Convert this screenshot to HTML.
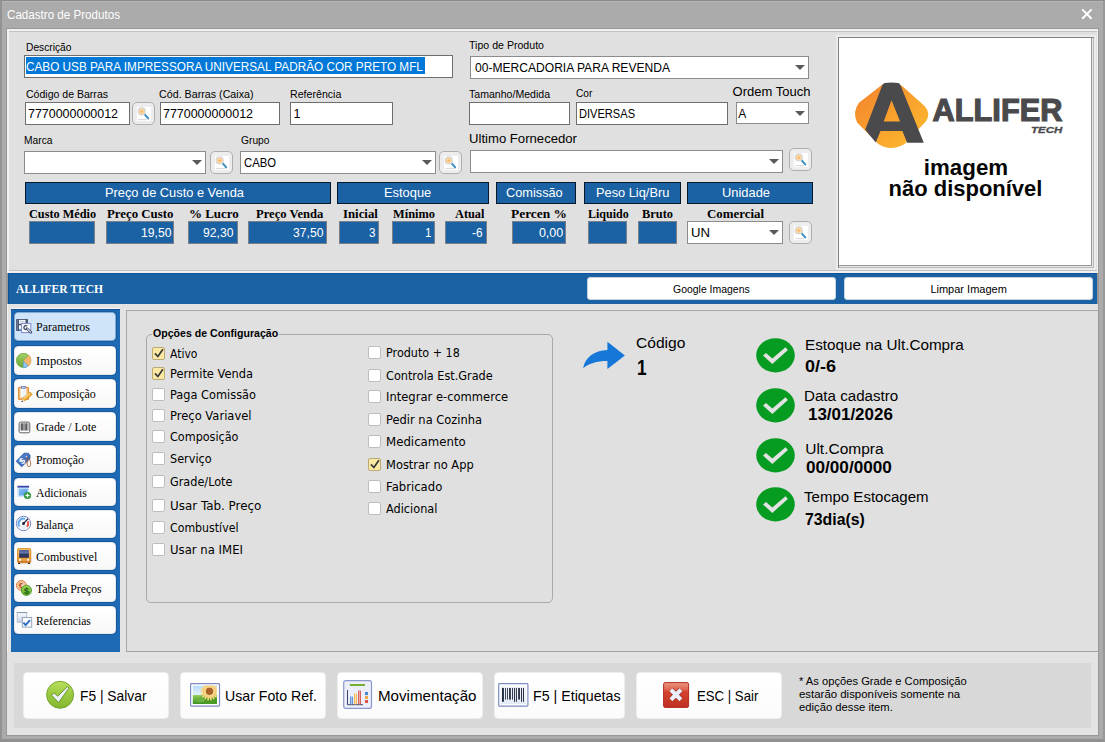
<!DOCTYPE html>
<html lang="pt-BR">
<head>
<meta charset="utf-8">
<title>Cadastro de Produtos</title>
<style>
*{box-sizing:border-box;margin:0;padding:0}
html,body{width:1105px;height:742px;overflow:hidden}
body{position:relative;background:#ababab;font-family:"Liberation Sans",sans-serif;font-size:12px;color:#000}
#win{position:absolute;left:0;top:0;width:1105px;height:742px;background:#ababab;overflow:hidden}
#win>div,#win>svg{position:absolute}
.t{white-space:nowrap;line-height:1;transform-origin:0 50%}
.inp{background:#fff;border:1px solid #6e6e6e;height:23px}
.cmb{background:#fff;border:1px solid #8c8c8c;height:23px}
.cmb:after{content:"";position:absolute;right:3px;top:8px;border-left:5px solid transparent;border-right:5px solid transparent;border-top:5px solid #5a5a5a}
.sb{width:23px;height:23px;border:1px solid #adadad;border-radius:5px;background:#ededed}
.sb svg{position:absolute;left:4px;top:4px}
.hd{height:22px;background:#1b62a4;border:1px solid #06182c}
.bx{height:23px;background:#1b62a4;border:1px solid #7b7f86}
.wb{height:23px;background:#fff;border:1px solid #c9d3df;border-radius:3px}
.nb{left:14px;width:102px;background:linear-gradient(#ffffff,#f8f8f8);border:1px solid #e3e8ee;border-radius:4px;box-shadow:0 0 0 1px #17599f}
.nb.sel{background:#cfe4f8;border-color:#7fadd9;box-shadow:0 0 0 1px #17599f}
.cb{width:13px;height:13px;background:#fff;border:1px solid #bdbdbd;border-radius:2px}
.cb.on{background:#fbe9a3;border-color:#b9ab76}
.cb svg{position:absolute;left:-1px;top:-1px}
.bb{top:672px;height:47px;background:linear-gradient(#ffffff,#fbfbfb);border:1px solid #ededed;border-radius:4px}
</style>
</head>
<body>
<div id="win">
<!-- window frame -->
<div style="left:0;top:0;width:1105px;height:742px;border:1px solid #8a8a8a;border-left:2px solid #939393;border-right:2px solid #989898;border-bottom:3px solid #909090"></div>
<div style="left:2px;top:1px;width:1101px;height:1px;background:#b6b6b6"></div>
<div style="left:6px;top:28px;width:1093px;height:708px;background:#979797"></div>
<svg style="left:1081px;top:8px" width="12" height="12" viewBox="0 0 12 12"><path d="M1.2 1.4 L10.6 10.8 M10.6 1.4 L1.2 10.8" stroke="#fff" stroke-width="2" fill="none"/></svg>

<!-- top panel -->
<div style="left:7px;top:29px;width:1091px;height:244px;background:#f1f1f1"></div>
<div style="left:9px;top:31px;width:1088px;height:240px;background:#e0e0e0;border-top:1px solid #c2c2c2;border-bottom:1px solid #c2c2c2"></div>

<div class="inp" style="left:24px;top:55px;width:429px"></div>
<div style="left:26px;top:57px;width:399px;height:17px;background:#0078d7"></div>
<div class="cmb" style="left:470px;top:56px;width:339px"></div>

<div class="inp" style="left:25px;top:102px;width:105px"></div>
<div class="sb" style="left:132px;top:102px"><svg width="14" height="14" viewBox="0 0 14 14"><rect x="0" y="0" width="14" height="14" fill="#fff"/><path d="M1.3 12.6 H10" stroke="#d6d6d6" stroke-width="1"/><path d="M7.5 7.2 L11.2 11.4" stroke="#3b8ec2" stroke-width="2" stroke-linecap="round"/><circle cx="4.7" cy="4.4" r="3.5" fill="#fbd6a2" stroke="#d6d6d6" stroke-width="1.2"/><path d="M3 4.8 Q4.6 2.4 6.4 4.6 Q4.8 6.8 3 4.8Z" fill="#f5b565"/></svg></div>
<div class="inp" style="left:160px;top:102px;width:120px"></div>
<div class="inp" style="left:290px;top:102px;width:103px"></div>
<div class="inp" style="left:469px;top:102px;width:101px"></div>
<div class="inp" style="left:576px;top:102px;width:152px"></div>
<div class="cmb" style="left:736px;top:101.5px;width:73px;height:22.5px"></div>

<div class="cmb" style="left:24px;top:151px;width:182px"></div>
<div class="sb" style="left:210px;top:151px"><svg width="14" height="14" viewBox="0 0 14 14"><rect x="0" y="0" width="14" height="14" fill="#fff"/><path d="M1.3 12.6 H10" stroke="#d6d6d6" stroke-width="1"/><path d="M7.5 7.2 L11.2 11.4" stroke="#3b8ec2" stroke-width="2" stroke-linecap="round"/><circle cx="4.7" cy="4.4" r="3.5" fill="#fbd6a2" stroke="#d6d6d6" stroke-width="1.2"/><path d="M3 4.8 Q4.6 2.4 6.4 4.6 Q4.8 6.8 3 4.8Z" fill="#f5b565"/></svg></div>
<div class="cmb" style="left:240px;top:151px;width:196px"></div>
<div class="sb" style="left:439px;top:151px"><svg width="14" height="14" viewBox="0 0 14 14"><rect x="0" y="0" width="14" height="14" fill="#fff"/><path d="M1.3 12.6 H10" stroke="#d6d6d6" stroke-width="1"/><path d="M7.5 7.2 L11.2 11.4" stroke="#3b8ec2" stroke-width="2" stroke-linecap="round"/><circle cx="4.7" cy="4.4" r="3.5" fill="#fbd6a2" stroke="#d6d6d6" stroke-width="1.2"/><path d="M3 4.8 Q4.6 2.4 6.4 4.6 Q4.8 6.8 3 4.8Z" fill="#f5b565"/></svg></div>
<div class="cmb" style="left:470px;top:150px;width:313px"></div>
<div class="sb" style="left:789px;top:148px"><svg width="14" height="14" viewBox="0 0 14 14"><rect x="0" y="0" width="14" height="14" fill="#fff"/><path d="M1.3 12.6 H10" stroke="#d6d6d6" stroke-width="1"/><path d="M7.5 7.2 L11.2 11.4" stroke="#3b8ec2" stroke-width="2" stroke-linecap="round"/><circle cx="4.7" cy="4.4" r="3.5" fill="#fbd6a2" stroke="#d6d6d6" stroke-width="1.2"/><path d="M3 4.8 Q4.6 2.4 6.4 4.6 Q4.8 6.8 3 4.8Z" fill="#f5b565"/></svg></div>

<div class="hd" style="left:25px;top:182px;width:306px"></div>
<div class="hd" style="left:337px;top:182px;width:152px"></div>
<div class="hd" style="left:496px;top:182px;width:80px"></div>
<div class="hd" style="left:584px;top:182px;width:97px"></div>
<div class="hd" style="left:687px;top:182px;width:126px"></div>

<div class="bx" style="left:29px;top:221px;width:66px"></div>
<div class="bx" style="left:106px;top:221px;width:68px"></div>
<div class="bx" style="left:188px;top:221px;width:50px"></div>
<div class="bx" style="left:248px;top:221px;width:79px"></div>
<div class="bx" style="left:339px;top:221px;width:40px"></div>
<div class="bx" style="left:392px;top:221px;width:43px"></div>
<div class="bx" style="left:445px;top:221px;width:42px"></div>
<div class="bx" style="left:512px;top:221px;width:54px"></div>
<div class="bx" style="left:588px;top:221px;width:39px"></div>
<div class="bx" style="left:638px;top:221px;width:39px"></div>
<div class="cmb" style="left:687px;top:221px;width:96px"></div>
<div class="sb" style="left:789px;top:221px"><svg width="14" height="14" viewBox="0 0 14 14"><rect x="0" y="0" width="14" height="14" fill="#fff"/><path d="M1.3 12.6 H10" stroke="#d6d6d6" stroke-width="1"/><path d="M7.5 7.2 L11.2 11.4" stroke="#3b8ec2" stroke-width="2" stroke-linecap="round"/><circle cx="4.7" cy="4.4" r="3.5" fill="#fbd6a2" stroke="#d6d6d6" stroke-width="1.2"/><path d="M3 4.8 Q4.6 2.4 6.4 4.6 Q4.8 6.8 3 4.8Z" fill="#f5b565"/></svg></div>

<!-- image panel -->
<div style="left:836px;top:35px;width:260px;height:235px;background:#ececec"></div>
<div style="left:838px;top:37px;width:256px;height:231px;background:#b9b9b9;border-left:1px solid #828282;border-top:1px solid #828282"></div>
<div style="left:839px;top:38px;width:254px;height:229px;background:#e6e6e6"></div>
<div style="left:839px;top:38px;width:253px;height:228px;background:#989898"></div>
<div style="left:839px;top:38px;width:252px;height:227px;background:#fff"></div>
<svg style="left:840px;top:39px" width="252" height="226" viewBox="840 39 252 226">
<defs><linearGradient id="lg" x1="0" y1="0" x2="1" y2="1"><stop offset="0" stop-color="#f4812d"/><stop offset="1" stop-color="#fdbf2d"/></linearGradient></defs>
<path d="M859 102.8 L882.4 84.6 Q890.4 81.6 901.6 85.6 L924.8 106.3 Q931.2 113.5 925.8 121.5 L904.6 143.9 Q890.4 152 878.3 143.9 L857.1 122.5 Q852 112 859 102.8 Z" fill="url(#lg)"/>
<path d="M884.6 83 Q891.5 82.2 898.3 83 Q899.8 83.4 900.4 85 L923.8 142.7 L907.1 142.7 L902.4 131.1 L880.5 131.1 L875.8 142.4 L865.2 129.8 L882.4 85 Q883.2 83.4 884.6 83 Z M891.5 100.2 L883.7 121.5 L900.1 121.5 Z" fill="#4a4a4d" fill-rule="evenodd"/>
<text x="932.6" y="0" transform="translate(0,121.4) scale(1,1.09)" font-family="'Liberation Sans',sans-serif" font-weight="bold" font-size="28.4" fill="#4a4a4d" stroke="#4a4a4d" stroke-width="1.1" textLength="129.8" lengthAdjust="spacingAndGlyphs">ALLIFER</text>
<text x="1031" y="132.7" font-family="'Liberation Sans',sans-serif" font-weight="bold" font-style="italic" font-size="9" fill="#4a4a4d" stroke="#4a4a4d" stroke-width="0.3" textLength="31.2" lengthAdjust="spacingAndGlyphs">TECH</text>
<text x="923.8" y="175" font-family="'Liberation Sans',sans-serif" font-weight="bold" font-size="21.7" fill="#050505" textLength="84.4" lengthAdjust="spacingAndGlyphs">imagem</text>
<text x="888.6" y="195.5" font-family="'Liberation Sans',sans-serif" font-weight="bold" font-size="21.7" fill="#050505" textLength="153.8" lengthAdjust="spacingAndGlyphs">não disponível</text>
</svg>

<!-- blue band -->
<div style="left:8px;top:273px;width:1089px;height:31px;background:#1a62a4;border-top:1px solid #0e539b;border-left:1px solid #0e539b"></div>
<div class="wb" style="left:587px;top:277px;width:249px"></div>
<div class="wb" style="left:844px;top:277px;width:249px"></div>

<!-- sidebar -->
<div style="left:7px;top:304px;width:1091px;height:348px;background:#e3e3e3;border-left:1px solid #f4f4f4"></div>
<div style="left:11px;top:308px;width:108.5px;height:344px;background:#1e6ab4;border-top:1px solid #f4f4f4;box-shadow:inset 0 1px 0 #125096"></div>
<div class="nb sel" style="top:312px;height:29px"></div>
<div class="nb" style="top:346px;height:29px"></div>
<div class="nb" style="top:379px;height:29px"></div>
<div class="nb" style="top:412px;height:29px"></div>
<div class="nb" style="top:445px;height:28px"></div>
<div class="nb" style="top:478px;height:28px"></div>
<div class="nb" style="top:510px;height:28px"></div>
<div class="nb" style="top:542px;height:28px"></div>
<div class="nb" style="top:574px;height:28px"></div>
<div class="nb" style="top:606px;height:28px"></div>

<!-- Parametros: floppy + doc/wrench -->
<svg style="left:16px;top:319px" width="17" height="15" viewBox="0 0 17 15"><rect x="0.1" y="0" width="11.9" height="11.9" rx=".6" fill="#4a5572"/><rect x="0.9" y="0.6" width="1.1" height="10.6" fill="#6e7890"/><rect x="3" y="0.9" width="6.5" height="3.9" fill="#f2f5fb"/><rect x="4" y="2.1" width="4.6" height="1.4" fill="#c9cfdc"/><rect x="3" y="6.3" width="4" height="4.9" fill="#fdfdfd"/><rect x="3" y="10.1" width="4" height="1.1" fill="#3f8fdc"/><rect x="5.6" y="4.6" width="9.2" height="9" fill="#fbfcff" stroke="#7f88c8" stroke-width="1"/><path d="M11.2 7 A2 2 0 1 0 11.6 9.6" fill="none" stroke="#3a4560" stroke-width="1.3"/><path d="M11 9.6 L14.8 13.4" stroke="#3a4560" stroke-width="2.5" stroke-linecap="round"/><path d="M11.4 10 L14.6 13.2" stroke="#c4d0e6" stroke-width="1.2" stroke-linecap="round"/></svg>
<!-- Impostos: pie -->
<svg style="left:16px;top:353px" width="17" height="16" viewBox="0 0 17 16"><defs><linearGradient id="pg" x1="0" y1="0" x2="0" y2="1"><stop offset="0" stop-color="#a3d16c"/><stop offset=".5" stop-color="#86bb4c"/><stop offset="1" stop-color="#6aa637"/></linearGradient></defs><circle cx="7.5" cy="7.4" r="7.1" fill="url(#pg)" stroke="#5f9d30" stroke-width=".7"/><path d="M7.5 7.4 L12.45 12.9 A7.4 7.4 0 0 1 7.11 14.79 Z" fill="#8ec5f2" stroke="#4a8ad0" stroke-width=".4"/><path d="M7.7 7.4 L13.0 2.26 A7.4 7.4 0 0 1 12.65 12.9 Z" fill="#f8b872" stroke="#d99450" stroke-width=".5"/></svg>
<!-- Composicao: clipboard + pencil -->
<svg style="left:17px;top:385px" width="16" height="18" viewBox="0 0 16 18"><rect x="1.7" y="2.6" width="9.6" height="11.7" rx=".8" fill="#f9d9a8" stroke="#e2933f" stroke-width="1.5"/><rect x="3.9" y="2.5" width="5" height="9.4" fill="#eef2fa"/><rect x="3.9" y="2.5" width="1.6" height="9.4" fill="#fbfcff"/><rect x="3.9" y="1" width="5" height="2.7" rx=".8" fill="#6f80bb"/><rect x="4.9" y="1.9" width="3" height=".8" fill="#eef1fa"/><path d="M13.2 7 L15.4 9.4 L7.6 16 L5.3 13.6 Z" fill="#f2b035" stroke="#c88422" stroke-width=".6"/><path d="M12.6 8.2 L6.4 13.7" stroke="#fdf0c0" stroke-width="1"/><path d="M5.3 13.6 L7.6 16 L4.6 17 Z" fill="#f4dcb4"/><path d="M5 15.4 L6.2 16.5 L4.4 17.2 Z" fill="#1c2150"/></svg>
<!-- Grade/Lote: barcode -->
<svg style="left:18px;top:421px" width="13" height="13" viewBox="0 0 13 13"><rect x="1.1" y="1.1" width="10.7" height="10.7" rx="1.6" fill="#fbfbfb" stroke="#4a4e56" stroke-width=".9"/><rect x="2.2" y="2.4" width="8.6" height="7" fill="#b0b0b0"/><rect x="3" y="2.4" width="2" height="7" fill="#626468"/><rect x="5" y="2.4" width="2.4" height="7" fill="#979797"/><rect x="7.4" y="2.4" width="2" height="7" fill="#585a5e"/><rect x="9.4" y="2.4" width="1.4" height="7" fill="#bdbdbd"/></svg>
<!-- Promocao: tag -->
<svg style="left:15px;top:452px" width="18" height="17" viewBox="0 0 18 17"><defs><linearGradient id="tg" x1="0" y1="0" x2="1" y2="1"><stop offset="0" stop-color="#5a8ad6"/><stop offset="1" stop-color="#2f5fae"/></linearGradient></defs><path d="M1.1 9.3 L9 1.2 L13.2 1.2 L15 3 L15 6.7 L6.7 14.8 Z" fill="url(#tg)" stroke="#234f9a" stroke-width=".7" stroke-linejoin="round"/><text x="4.6" y="11.6" font-family="'Liberation Sans',sans-serif" font-weight="bold" font-size="8.6" fill="#fff" transform="rotate(-45 7.4 8.6)">$</text><circle cx="11.4" cy="4.6" r="0.8" fill="#eef2fc"/><path d="M11.6 4.8 C12.4 6 12.2 9 12.2 12 C12.3 14.6 14 15.4 15 14.2 C16.4 12.4 15.6 9 13.6 6.2" fill="none" stroke="#a55a2c" stroke-width=".9"/></svg>
<!-- Adicionais: window + plus -->
<svg style="left:17px;top:485px" width="16" height="16" viewBox="0 0 16 16"><defs><linearGradient id="wg" x1="0" y1="0" x2="1" y2="1"><stop offset="0" stop-color="#8cc0f2"/><stop offset="1" stop-color="#4d93e2"/></linearGradient></defs><rect x="0.4" y="2.6" width="11.6" height="9.2" fill="#c4e2fc"/><rect x="2" y="3.8" width="8.6" height="6.6" fill="url(#wg)"/><rect x="0.4" y="0.8" width="11.6" height="1.8" fill="#3944b0"/><circle cx="10.5" cy="10.5" r="3.6" fill="#2f9b3d"/><path d="M10.5 7.9 L11.3 9.7 L13.1 10.5 L11.3 11.3 L10.5 13.1 L9.7 11.3 L7.9 10.5 L9.7 9.7 Z" fill="#fff"/></svg>
<!-- Balanca: gauge -->
<svg style="left:15px;top:515px" width="17" height="17" viewBox="0 0 17 17"><circle cx="8.5" cy="8.5" r="7.2" fill="#fbfcfe" stroke="#5a68b8" stroke-width=".8"/><path d="M3.6 12.4 A6 6 0 0 0 13.4 12.4 L10.6 10.4 L6.4 10.4 Z" fill="#e9eef8"/><path d="M4.55 11.39 A4.9 4.9 0 0 1 10.14 3.88" fill="none" stroke="#5eaaec" stroke-width="2"/><path d="M12.69 6.37 A4.7 4.7 0 0 1 11.99 11.64" fill="none" stroke="#e24a3a" stroke-width="1.9"/><path d="M8.5 8.5 L12.8 4" stroke="#1b2142" stroke-width="1.1" stroke-linecap="round"/><circle cx="8.5" cy="8.5" r="1.5" fill="#1b2142"/></svg>
<!-- Combustivel: bus -->
<svg style="left:17px;top:548px" width="15" height="17" viewBox="0 0 15 17"><defs><linearGradient id="bg1" x1="0" y1="0" x2="0" y2="1"><stop offset="0" stop-color="#f6bd58"/><stop offset=".8" stop-color="#ec9a34"/><stop offset="1" stop-color="#b8601a"/></linearGradient><linearGradient id="bw" x1="0" y1="0" x2="0" y2="1"><stop offset="0" stop-color="#4a5a94"/><stop offset=".35" stop-color="#6c7bb0"/><stop offset=".5" stop-color="#333e68"/><stop offset="1" stop-color="#262f54"/></linearGradient></defs><rect x="1" y="14.6" width="2.2" height="1.4" rx=".5" fill="#151a30"/><rect x="10.9" y="14.6" width="2.2" height="1.4" rx=".5" fill="#151a30"/><rect x="0.4" y="0.4" width="13.4" height="14.4" rx="1.6" fill="url(#bg1)" stroke="#cf7f24" stroke-width=".8"/><rect x="2.1" y="2.1" width="9.8" height="7.7" rx=".8" fill="url(#bw)"/><rect x="2.1" y="10.9" width="1.9" height="1.9" fill="#fff"/><rect x="10.1" y="10.9" width="1.9" height="1.9" fill="#fff"/><rect x="4.6" y="11" width="4.8" height="1.7" fill="#e9a544"/></svg>
<!-- Tabela Precos: coins -->
<svg style="left:15px;top:578px" width="19" height="19" viewBox="0 0 19 19"><defs><linearGradient id="cg" x1="0" y1="0" x2="0" y2="1"><stop offset="0" stop-color="#a0d85a"/><stop offset="1" stop-color="#5fa82c"/></linearGradient></defs><circle cx="6.3" cy="7.4" r="4.9" fill="#f9d6b4" stroke="#d77a3c" stroke-width="1"/><circle cx="6.3" cy="7.4" r="3.4" fill="none" stroke="#eaa878" stroke-width=".6"/><text x="3.7" y="10.1" font-family="'Liberation Sans',sans-serif" font-weight="bold" font-size="7.6" fill="#b84a1c">€</text><circle cx="11.4" cy="12.3" r="5.1" fill="url(#cg)" stroke="#4f962a" stroke-width=".9"/><text x="8.9" y="15.6" font-family="'Liberation Sans',sans-serif" font-weight="bold" font-size="9" fill="#1f5c12">$</text></svg>
<!-- Referencias: squares + check -->
<svg style="left:16px;top:611px" width="17" height="17" viewBox="0 0 17 17"><defs><linearGradient id="rg1" x1="0" y1="0" x2="0" y2="1"><stop offset="0" stop-color="#fdfeff"/><stop offset="1" stop-color="#c6d2e3"/></linearGradient></defs><rect x="1.2" y="1.6" width="9.6" height="9.6" fill="url(#rg1)" stroke="#a9b7cb" stroke-width=".8"/><path d="M0.8 1.6 H11.2" stroke="#7d8fab" stroke-width=".9"/><rect x="6.3" y="6.5" width="9.4" height="9.6" fill="#fcfdff" stroke="#8c9cb6" stroke-width=".9"/><path d="M7.4 11.6 L9.6 14.1 L14 9.2" fill="none" stroke="#2a6fc2" stroke-width="2"/></svg>


<!-- main panel -->
<div style="left:126px;top:310px;width:972px;height:342px;background:#e0e0e0;border:1px solid #a6a6a6;border-right:none;border-bottom-color:#a0a0a0"></div>
<div style="left:146px;top:334px;width:407px;height:269px;border:1px solid #a9a9a9;border-radius:5px"></div>

<div class="cb on" style="left:152px;top:347px"><svg width="13" height="13" viewBox="0 0 13 13"><path d="M2.9 6.4 L5.9 9.5 L10.9 2.2" fill="none" stroke="#383838" stroke-width="1.7"/></svg></div>
<div class="cb on" style="left:152px;top:367px"><svg width="13" height="13" viewBox="0 0 13 13"><path d="M2.9 6.4 L5.9 9.5 L10.9 2.2" fill="none" stroke="#383838" stroke-width="1.7"/></svg></div>
<div class="cb" style="left:152px;top:388px"></div>
<div class="cb" style="left:152px;top:409px"></div>
<div class="cb" style="left:152px;top:430px"></div>
<div class="cb" style="left:152px;top:452px"></div>
<div class="cb" style="left:152px;top:475px"></div>
<div class="cb" style="left:152px;top:499px"></div>
<div class="cb" style="left:152px;top:521px"></div>
<div class="cb" style="left:152px;top:543px"></div>
<div class="cb" style="left:368px;top:346px"></div>
<div class="cb" style="left:368px;top:369px"></div>
<div class="cb" style="left:368px;top:390px"></div>
<div class="cb" style="left:368px;top:413px"></div>
<div class="cb" style="left:368px;top:435px"></div>
<div class="cb on" style="left:368px;top:458px"><svg width="13" height="13" viewBox="0 0 13 13"><path d="M2.9 6.4 L5.9 9.5 L10.9 2.2" fill="none" stroke="#383838" stroke-width="1.7"/></svg></div>
<div class="cb" style="left:368px;top:480px"></div>
<div class="cb" style="left:368px;top:502px"></div>

<!-- code arrow -->
<svg style="left:582px;top:341px" width="44" height="29" viewBox="0 0 44 29"><path d="M1.1 27.3 C3 17 12 9.3 25.4 9.1 L25.4 0.7 L42.9 14.4 L25.4 28.1 L25.4 19.9 C15 19.9 6 22.5 1.1 27.3 Z" fill="#1578d8"/></svg>
<svg style="left:756px;top:338px" width="40" height="35" viewBox="0 0 40 35"><ellipse cx="19.5" cy="17.3" rx="19.3" ry="17.1" fill="#069c22"/><path d="M7 17.4 L10 15 L16.3 20.4 L29.5 9.2 L31.9 12 L16.3 25.9 Z" fill="#e2e2e2"/></svg>
<svg style="left:756px;top:388px" width="40" height="35" viewBox="0 0 40 35"><ellipse cx="19.5" cy="17.3" rx="19.3" ry="17.1" fill="#069c22"/><path d="M7 17.4 L10 15 L16.3 20.4 L29.5 9.2 L31.9 12 L16.3 25.9 Z" fill="#e2e2e2"/></svg>
<svg style="left:756px;top:437.5px" width="40" height="35" viewBox="0 0 40 35"><ellipse cx="19.5" cy="17.3" rx="19.3" ry="17.1" fill="#069c22"/><path d="M7 17.4 L10 15 L16.3 20.4 L29.5 9.2 L31.9 12 L16.3 25.9 Z" fill="#e2e2e2"/></svg>
<svg style="left:756px;top:487px" width="40" height="35" viewBox="0 0 40 35"><ellipse cx="19.5" cy="17.3" rx="19.3" ry="17.1" fill="#069c22"/><path d="M7 17.4 L10 15 L16.3 20.4 L29.5 9.2 L31.9 12 L16.3 25.9 Z" fill="#e2e2e2"/></svg>

<!-- bottom bar -->
<div style="left:7px;top:652px;width:1091px;height:83px;background:#e3e3e3"></div>
<div style="left:14px;top:663px;width:1077px;height:65px;background:#d8d8d8"></div>
<div class="bb" style="left:23px;width:146px"></div>
<div class="bb" style="left:180px;width:146px"></div>
<div class="bb" style="left:337px;width:146px"></div>
<div class="bb" style="left:494px;width:131px"></div>
<div class="bb" style="left:636px;width:146px"></div>

<!-- save check -->
<svg style="left:45px;top:680px" width="30" height="30" viewBox="0 0 30 30"><defs><linearGradient id="sg" x1="0" y1="0" x2="0" y2="1"><stop offset="0" stop-color="#b9df60"/><stop offset=".45" stop-color="#9ccb40"/><stop offset="1" stop-color="#84b62e"/></linearGradient></defs><circle cx="15.1" cy="14.8" r="13.5" fill="url(#sg)" stroke="#6d9e2a" stroke-width=".9"/><path d="M6.6 15.2 L8.8 12.8 L12.8 16.3 L22.5 6.6 L23.9 8.2 L13.6 22.5 Z" fill="#eff1f9" stroke="#4f7f22" stroke-width=".8" stroke-linejoin="round"/></svg>
<!-- photo -->
<svg style="left:189px;top:682px" width="32" height="26" viewBox="0 0 32 26"><defs><linearGradient id="sky" x1="0" y1="0" x2="0" y2="1"><stop offset="0" stop-color="#b7dcf9"/><stop offset=".48" stop-color="#e2f1fc"/><stop offset=".54" stop-color="#8cc95a"/><stop offset="1" stop-color="#3d9122"/></linearGradient><clipPath id="pc"><rect x="3.8" y="3.7" width="24.2" height="18.3"/></clipPath></defs><rect x="1.6" y="1.7" width="28.9" height="22.4" rx=".8" fill="#fff" stroke="#7d8cc2" stroke-width="1.2"/><rect x="3.8" y="3.7" width="24.2" height="18.3" fill="url(#sky)"/><g clip-path="url(#pc)"><path d="M7 20 Q12 12 15.5 14.5 L16 20 Z" fill="#6db240"/><path d="M15.4 16 Q19 13 23 17 Q27 13 29 17 L29 22 L15.4 22 Z" fill="#4c9a26"/><circle cx="20.5" cy="9.3" r="7" fill="#f2b048"/><path d="M23.5 9.3 L29.1 9.3 M23.3 10.3 L28.6 12.2 M22.8 11.2 L27.1 14.8 M22.0 11.9 L24.8 16.7 M21.0 12.3 L22.0 17.8 M20.0 12.3 L19.0 17.8 M19.0 11.9 L16.2 16.7 M18.2 11.2 L13.9 14.8 M17.7 10.3 L12.4 12.2 M17.5 9.3 L11.9 9.3 M17.7 8.3 L12.4 6.4 M18.2 7.4 L13.9 3.8 M19.0 6.7 L16.2 1.9 M20.0 6.3 L19.0 0.8 M21.0 6.3 L22.0 0.8 M22.0 6.7 L24.8 1.9 M22.8 7.4 L27.1 3.8 M23.3 8.3 L28.6 6.4 " stroke="#f9d888" stroke-width="1.5" stroke-linecap="round"/><circle cx="20.5" cy="9.3" r="3.4" fill="#a9632b"/><circle cx="20.5" cy="9.3" r="3.4" fill="none" stroke="#8a4a1c" stroke-width=".5"/></g></svg>
<!-- chart -->
<svg style="left:343px;top:680px" width="30" height="30" viewBox="0 0 30 30"><defs><linearGradient id="b1" x1="0" y1="0" x2="1" y2="0"><stop offset="0" stop-color="#3f78c4"/><stop offset=".5" stop-color="#a9cdf2"/><stop offset="1" stop-color="#3f78c4"/></linearGradient><linearGradient id="b2" x1="0" y1="0" x2="1" y2="0"><stop offset="0" stop-color="#eba13a"/><stop offset=".5" stop-color="#fde3a8"/><stop offset="1" stop-color="#eba13a"/></linearGradient><linearGradient id="b3" x1="0" y1="0" x2="1" y2="0"><stop offset="0" stop-color="#c9403c"/><stop offset=".5" stop-color="#f0a8a4"/><stop offset="1" stop-color="#c9403c"/></linearGradient></defs><rect x="0.7" y="0.7" width="27.8" height="27.6" rx="2" fill="#eceff9" stroke="#8a98cc" stroke-width="1.2"/><rect x="6.9" y="4.1" width="15.1" height="1.8" fill="#6aa820"/><path d="M4.5 10 V24.7 H19.9" fill="none" stroke="#3a4468" stroke-width="1"/><path d="M7 24.2 V17.6 A1.5 1.5 0 0 1 10 17.6 V24.2 Z" fill="url(#b1)"/><path d="M11 24.2 V14.5 A1.5 1.5 0 0 1 14 14.5 V24.2 Z" fill="url(#b2)"/><path d="M15 24.2 V11.5 A1.5 1.5 0 0 1 18 11.5 V24.2 Z" fill="url(#b3)"/><rect x="22" y="12" width="3" height="3.1" fill="#4a86cc"/><rect x="22" y="16" width="3" height="3" fill="#eda848"/><rect x="22" y="20" width="3" height="3" fill="#d9534f"/></svg>
<!-- barcode -->
<svg style="left:498px;top:682px" width="31" height="26" viewBox="0 0 31 26"><defs><linearGradient id="bcg" x1="0" y1="0" x2="0" y2="1"><stop offset="0" stop-color="#f6f8fd"/><stop offset="1" stop-color="#e4e9f6"/></linearGradient></defs><rect x="0.7" y="1.7" width="29.2" height="22.4" rx=".8" fill="#fff" stroke="#7d8cc2" stroke-width="1.2"/><rect x="2.6" y="3.6" width="25.4" height="18.6" fill="url(#bcg)"/><rect x="3.98" y="5.9" width="1.94" height="13.9" fill="#232b3e"/><rect x="7.14" y="5.9" width="0.86" height="11.7" fill="#232b3e"/><rect x="8.98" y="5.9" width="0.87" height="11.7" fill="#232b3e"/><rect x="11.10" y="5.9" width="1.76" height="11.7" fill="#232b3e"/><rect x="14.08" y="5.9" width="0.92" height="11.7" fill="#232b3e"/><rect x="15.97" y="5.9" width="0.97" height="13.9" fill="#232b3e"/><rect x="17.90" y="5.9" width="1.00" height="13.9" fill="#232b3e"/><rect x="20.15" y="5.9" width="1.79" height="11.7" fill="#232b3e"/><rect x="23.06" y="5.9" width="0.97" height="13.9" fill="#232b3e"/><rect x="25.00" y="5.9" width="0.97" height="13.9" fill="#232b3e"/></svg>
<!-- exit x -->
<svg style="left:663px;top:682px" width="27" height="27" viewBox="0 0 27 27"><defs><linearGradient id="rg" x1="0" y1="0" x2="0" y2="1"><stop offset="0" stop-color="#ea9883"/><stop offset=".3" stop-color="#de604c"/><stop offset=".36" stop-color="#d4452f"/><stop offset="1" stop-color="#bf2f20"/></linearGradient></defs><rect x="0.6" y="0.6" width="25" height="24.8" rx="1.6" fill="url(#rg)" stroke="#b32c20" stroke-width="1"/><path d="M7.9 7.7 L17.9 17.7 M17.9 7.7 L7.9 17.7" stroke="#a82a1c" stroke-width="5.6" stroke-linecap="butt"/><path d="M7.9 7.7 L17.9 17.7 M17.9 7.7 L7.9 17.7" stroke="#eaeef8" stroke-width="4.2" stroke-linecap="butt"/></svg>


<div class="t" style="left:7.4px;top:9px;font-size:12px;color:#fff;transform:scaleX(0.968);">Cadastro de Produtos</div>
<div class="t" style="left:25.5px;top:42px;font-size:11px;transform:scaleX(0.930);">Descrição</div>
<div class="t" style="left:468.8px;top:40px;font-size:11px;transform:scaleX(0.963);">Tipo de Produto</div>
<div class="t" style="left:25.8px;top:89px;font-size:11px;transform:scaleX(0.958);">Código de Barras</div>
<div class="t" style="left:158.9px;top:89px;font-size:11px;transform:scaleX(0.973);">Cód. Barras (Caixa)</div>
<div class="t" style="left:289.6px;top:89px;font-size:11px;transform:scaleX(0.966);">Referência</div>
<div class="t" style="left:469.2px;top:89px;font-size:11px;transform:scaleX(0.960);">Tamanho/Medida</div>
<div class="t" style="left:575.6px;top:88px;font-size:11px;transform:scaleX(0.925);">Cor</div>
<div class="t" style="left:732.6px;top:85px;font-size:13px;">Ordem Touch</div>
<div class="t" style="left:24.0px;top:135px;font-size:11px;transform:scaleX(0.933);">Marca</div>
<div class="t" style="left:240.6px;top:135px;font-size:11px;transform:scaleX(0.932);">Grupo</div>
<div class="t" style="left:469.2px;top:132px;font-size:13px;transform:scaleX(1.010);">Ultimo Fornecedor</div>
<div class="t" style="left:26.0px;top:61px;font-size:12px;color:#fff;transform:scaleX(0.980);">CABO USB PARA IMPRESSORA UNIVERSAL PADRÃO COR PRETO MFL</div>
<div class="t" style="left:475.3px;top:62px;font-size:12px;transform:scaleX(1.006);">00-MERCADORIA PARA REVENDA</div>
<div class="t" style="left:27.8px;top:108px;font-size:12.5px;transform:scaleX(0.996);">7770000000012</div>
<div class="t" style="left:162.5px;top:108px;font-size:12.5px;transform:scaleX(0.996);">7770000000012</div>
<div class="t" style="left:293.5px;top:108px;font-size:12.5px;">1</div>
<div class="t" style="left:578.6px;top:108px;font-size:12px;transform:scaleX(0.923);">DIVERSAS</div>
<div class="t" style="left:738.3px;top:108px;font-size:12px;">A</div>
<div class="t" style="left:244.4px;top:157px;font-size:12px;transform:scaleX(0.941);">CABO</div>
<div class="t" style="left:690.8px;top:227px;font-size:12px;transform:scaleX(1.095);">UN</div>
<div class="t" style="left:104.5px;top:186px;font-size:13px;color:#fff;transform:scaleX(0.986);">Preço de Custo e Venda</div>
<div class="t" style="left:383.8px;top:186px;font-size:13px;color:#fff;transform:scaleX(0.989);">Estoque</div>
<div class="t" style="left:506.3px;top:186px;font-size:13px;color:#fff;transform:scaleX(0.981);">Comissão</div>
<div class="t" style="left:596.2px;top:186px;font-size:13px;color:#fff;transform:scaleX(0.985);">Peso Liq/Bru</div>
<div class="t" style="left:722.3px;top:186px;font-size:13px;color:#fff;transform:scaleX(0.991);">Unidade</div>
<div class="t" style="left:29.3px;top:207px;font-size:13px;font-family:'Liberation Serif',serif;font-weight:bold;transform:scaleX(0.943);">Custo Médio</div>
<div class="t" style="left:107.2px;top:207px;font-size:13px;font-family:'Liberation Serif',serif;font-weight:bold;transform:scaleX(0.988);">Preço Custo</div>
<div class="t" style="left:188.9px;top:207px;font-size:13px;font-family:'Liberation Serif',serif;font-weight:bold;">% Lucro</div>
<div class="t" style="left:256.2px;top:207px;font-size:13px;font-family:'Liberation Serif',serif;font-weight:bold;transform:scaleX(0.969);">Preço Venda</div>
<div class="t" style="left:343.0px;top:207px;font-size:13px;font-family:'Liberation Serif',serif;font-weight:bold;transform:scaleX(0.986);">Inicial</div>
<div class="t" style="left:392.9px;top:207px;font-size:13px;font-family:'Liberation Serif',serif;font-weight:bold;transform:scaleX(0.953);">Mínimo</div>
<div class="t" style="left:455.4px;top:207px;font-size:13px;font-family:'Liberation Serif',serif;font-weight:bold;transform:scaleX(0.946);">Atual</div>
<div class="t" style="left:511.2px;top:207px;font-size:13px;font-family:'Liberation Serif',serif;font-weight:bold;transform:scaleX(1.032);">Percen %</div>
<div class="t" style="left:588.0px;top:207px;font-size:13px;font-family:'Liberation Serif',serif;font-weight:bold;transform:scaleX(0.925);">Liquido</div>
<div class="t" style="left:641.8px;top:207px;font-size:13px;font-family:'Liberation Serif',serif;font-weight:bold;transform:scaleX(0.954);">Bruto</div>
<div class="t" style="left:707.1px;top:207px;font-size:13px;font-family:'Liberation Serif',serif;font-weight:bold;transform:scaleX(0.991);">Comercial</div>
<div class="t" style="left:140.6px;top:227px;font-size:12.5px;color:#fff;transform:scaleX(0.972);">19,50</div>
<div class="t" style="left:203.3px;top:227px;font-size:12.5px;color:#fff;transform:scaleX(0.972);">92,30</div>
<div class="t" style="left:292.7px;top:227px;font-size:12.5px;color:#fff;transform:scaleX(0.972);">37,50</div>
<div class="t" style="left:369.1px;top:227px;font-size:12.5px;color:#fff;transform:scaleX(0.935);">3</div>
<div class="t" style="left:424.6px;top:227px;font-size:12.5px;color:#fff;transform:scaleX(0.935);">1</div>
<div class="t" style="left:472.0px;top:227px;font-size:12.5px;color:#fff;transform:scaleX(0.944);">-6</div>
<div class="t" style="left:538.9px;top:227px;font-size:12.5px;color:#fff;">0,00</div>
<div class="t" style="left:15.8px;top:283px;font-size:12.5px;font-family:'Liberation Serif',serif;font-weight:bold;color:#fff;transform:scaleX(0.927);">ALLIFER TECH</div>
<div class="t" style="left:672.7px;top:284px;font-size:11px;transform:scaleX(0.950);">Google Imagens</div>
<div class="t" style="left:930.4px;top:284px;font-size:11px;">Limpar Imagem</div>
<div class="t" style="left:36.0px;top:321px;font-size:12.5px;font-family:'Liberation Serif',serif;transform:scaleX(0.957);">Parametros</div>
<div class="t" style="left:36.0px;top:355px;font-size:12.5px;font-family:'Liberation Serif',serif;">Impostos</div>
<div class="t" style="left:36.0px;top:388px;font-size:12.5px;font-family:'Liberation Serif',serif;transform:scaleX(0.957);">Composição</div>
<div class="t" style="left:36.0px;top:421px;font-size:12.5px;font-family:'Liberation Serif',serif;transform:scaleX(0.955);">Grade / Lote</div>
<div class="t" style="left:36.0px;top:454px;font-size:12.5px;font-family:'Liberation Serif',serif;transform:scaleX(0.943);">Promoção</div>
<div class="t" style="left:36.0px;top:487px;font-size:12.5px;font-family:'Liberation Serif',serif;transform:scaleX(0.938);">Adicionais</div>
<div class="t" style="left:36.0px;top:519px;font-size:12.5px;font-family:'Liberation Serif',serif;transform:scaleX(0.926);">Balança</div>
<div class="t" style="left:36.0px;top:551px;font-size:12.5px;font-family:'Liberation Serif',serif;transform:scaleX(0.959);">Combustivel</div>
<div class="t" style="left:36.0px;top:583px;font-size:12.5px;font-family:'Liberation Serif',serif;transform:scaleX(0.944);">Tabela Preços</div>
<div class="t" style="left:36.0px;top:615px;font-size:12.5px;font-family:'Liberation Serif',serif;transform:scaleX(0.929);">Referencias</div>
<div class="t" style="left:152.2px;top:328px;font-size:11px;font-weight:bold;transform:scaleX(0.962);background:#e0e0e0;padding:0 1px;">Opções de Configuração</div>
<div class="t" style="left:170.4px;top:348px;font-size:12px;font-family:'DejaVu Sans','Liberation Sans',sans-serif;transform:scaleX(0.899);">Ativo</div>
<div class="t" style="left:170.4px;top:368px;font-size:12px;font-family:'DejaVu Sans','Liberation Sans',sans-serif;transform:scaleX(0.954);">Permite Venda</div>
<div class="t" style="left:170.4px;top:389px;font-size:12px;font-family:'DejaVu Sans','Liberation Sans',sans-serif;transform:scaleX(0.947);">Paga Comissão</div>
<div class="t" style="left:170.4px;top:410px;font-size:12px;font-family:'DejaVu Sans','Liberation Sans',sans-serif;transform:scaleX(0.960);">Preço Variavel</div>
<div class="t" style="left:170.4px;top:431px;font-size:12px;font-family:'DejaVu Sans','Liberation Sans',sans-serif;transform:scaleX(0.935);">Composição</div>
<div class="t" style="left:170.4px;top:453px;font-size:12px;font-family:'DejaVu Sans','Liberation Sans',sans-serif;transform:scaleX(0.939);">Serviço</div>
<div class="t" style="left:170.4px;top:476px;font-size:12px;font-family:'DejaVu Sans','Liberation Sans',sans-serif;transform:scaleX(0.939);">Grade/Lote</div>
<div class="t" style="left:170.4px;top:500px;font-size:12px;font-family:'DejaVu Sans','Liberation Sans',sans-serif;transform:scaleX(0.992);">Usar Tab. Preço</div>
<div class="t" style="left:170.4px;top:522px;font-size:12px;font-family:'DejaVu Sans','Liberation Sans',sans-serif;transform:scaleX(0.916);">Combustível</div>
<div class="t" style="left:170.4px;top:544px;font-size:12px;font-family:'DejaVu Sans','Liberation Sans',sans-serif;transform:scaleX(0.974);">Usar na IMEI</div>
<div class="t" style="left:385.9px;top:347px;font-size:12px;font-family:'DejaVu Sans','Liberation Sans',sans-serif;transform:scaleX(0.931);">Produto + 18</div>
<div class="t" style="left:385.9px;top:370px;font-size:12px;font-family:'DejaVu Sans','Liberation Sans',sans-serif;transform:scaleX(0.940);">Controla Est.Grade</div>
<div class="t" style="left:385.9px;top:391px;font-size:12px;font-family:'DejaVu Sans','Liberation Sans',sans-serif;transform:scaleX(0.962);">Integrar e-commerce</div>
<div class="t" style="left:385.9px;top:414px;font-size:12px;font-family:'DejaVu Sans','Liberation Sans',sans-serif;transform:scaleX(0.955);">Pedir na Cozinha</div>
<div class="t" style="left:385.9px;top:436px;font-size:12px;font-family:'DejaVu Sans','Liberation Sans',sans-serif;transform:scaleX(0.981);">Medicamento</div>
<div class="t" style="left:385.9px;top:459px;font-size:12px;font-family:'DejaVu Sans','Liberation Sans',sans-serif;transform:scaleX(0.955);">Mostrar no App</div>
<div class="t" style="left:385.9px;top:481px;font-size:12px;font-family:'DejaVu Sans','Liberation Sans',sans-serif;transform:scaleX(0.971);">Fabricado</div>
<div class="t" style="left:385.9px;top:503px;font-size:12px;font-family:'DejaVu Sans','Liberation Sans',sans-serif;transform:scaleX(0.943);">Adicional</div>
<div class="t" style="left:636.4px;top:335px;font-size:15.5px;transform:scaleX(1.006);">Código</div>
<div class="t" style="left:637.4px;top:357px;font-size:22px;font-weight:bold;transform:scaleX(0.784);">1</div>
<div class="t" style="left:805.2px;top:337px;font-size:15.5px;transform:scaleX(0.985);">Estoque na Ult.Compra</div>
<div class="t" style="left:805.2px;top:359px;font-size:16px;font-weight:bold;transform:scaleX(1.124);">0/-6</div>
<div class="t" style="left:804.3px;top:388px;font-size:15.5px;transform:scaleX(0.976);">Data cadastro</div>
<div class="t" style="left:808.2px;top:407px;font-size:16px;font-weight:bold;transform:scaleX(1.059);">13/01/2026</div>
<div class="t" style="left:805.2px;top:441px;font-size:15.5px;">Ult.Compra</div>
<div class="t" style="left:806.2px;top:460px;font-size:16px;font-weight:bold;transform:scaleX(1.071);">00/00/0000</div>
<div class="t" style="left:804.3px;top:489px;font-size:15.5px;transform:scaleX(0.971);">Tempo Estocagem</div>
<div class="t" style="left:804.8px;top:512px;font-size:16px;font-weight:bold;transform:scaleX(0.989);">73dia(s)</div>
<div class="t" style="left:80.3px;top:688px;font-size:15px;transform:scaleX(0.920);">F5 | Salvar</div>
<div class="t" style="left:225.4px;top:688px;font-size:15px;transform:scaleX(0.943);">Usar Foto Ref.</div>
<div class="t" style="left:378.4px;top:688px;font-size:15px;transform:scaleX(1.010);">Movimentação</div>
<div class="t" style="left:533.2px;top:688px;font-size:15px;transform:scaleX(0.949);">F5 | Etiquetas</div>
<div class="t" style="left:696.5px;top:688px;font-size:15px;transform:scaleX(0.879);">ESC | Sair</div>
<div class="t" style="left:799.4px;top:676px;font-size:11px;transform:scaleX(1.016);">* As opções Grade e Composição</div>
<div class="t" style="left:799.4px;top:689px;font-size:11px;transform:scaleX(1.038);">estarão disponíveis somente na</div>
<div class="t" style="left:799.4px;top:702px;font-size:11px;transform:scaleX(1.023);">edição desse item.</div>
</div>
</body>
</html>
